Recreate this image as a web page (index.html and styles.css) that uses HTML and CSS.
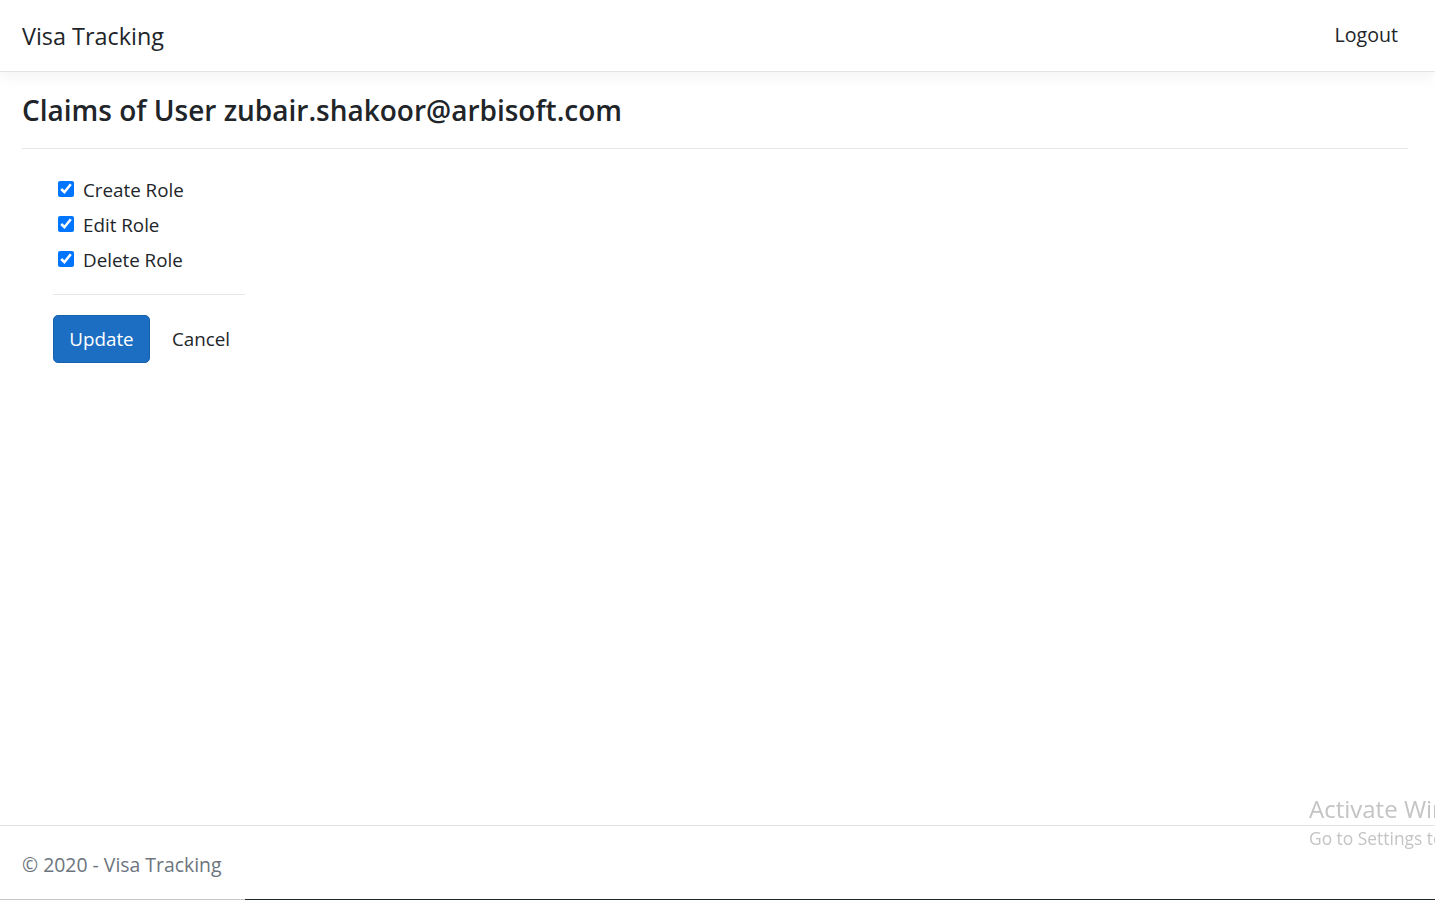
FILE: index.html
```html
<!DOCTYPE html>
<html lang="en">
<head>
<meta charset="utf-8">
<title>Claims - Visa Tracking</title>
<link rel="stylesheet" href="styles.css">
</head>
<body>
<div class="page">
  <header class="navbar">
    <a class="brand" href="#">Visa Tracking</a>
    <a class="nav-link" href="#">Logout</a>
  </header>
  <main class="main">
    <h4 class="title">Claims of User zubair.shakoor@arbisoft.com</h4>
    <hr class="rule">
    <form class="claims-form">
      <label class="check-row"><input type="checkbox" class="check" checked><span>Create Role</span></label>
      <label class="check-row"><input type="checkbox" class="check" checked><span>Edit Role</span></label>
      <label class="check-row"><input type="checkbox" class="check" checked><span>Delete Role</span></label>
      <hr class="rule rule-short">
      <div class="actions">
        <button type="button" class="btn btn-primary">Update</button>
        <a class="btn-link" href="#">Cancel</a>
      </div>
    </form>
  </main>
  <footer class="footer">
    <div class="footer-text">&copy; 2020 - Visa Tracking</div>
    <div class="bottom-strip"><div class="strip-light"></div><div class="strip-dark"></div></div>
  </footer>
</div>
<div class="watermark">
  <div class="wm-title">Activate Windows</div>
  <div class="wm-sub">Go to Settings to activate Windows.</div>
</div>
</body>
</html>
```
FILE: styles.css
```css
html, body {
  margin: 0;
  padding: 0;
  height: 100%;
  overflow: hidden;
  background: #fff;
}
body {
  font-family: "Open Sans", "Noto Sans", "Liberation Sans", sans-serif;
  font-size: 18.8px;
  color: #212529;
}
a { text-decoration: none; }
.page {
  display: flex;
  flex-direction: column;
  min-height: 100vh;
}
.navbar {
  height: 71px;
  border-bottom: 1px solid #e3e3e3;
  box-shadow: 0 5px 15px rgba(0,0,0,0.05);
  display: flex;
  align-items: center;
  justify-content: space-between;
  padding: 0 37px 0 22px;
  flex-shrink: 0;
}
.brand {
  font-size: 23.4px;
  color: #212529;
  line-height: 30px;
}
.nav-link {
  color: #212529;
  font-size: 19.6px;
  line-height: 30px;
  margin-top: -2px;
}
.main {
  padding: 20px 27px 0 22px;
  flex: 1;
}
.title {
  margin: 0;
  font-size: 28px;
  font-weight: 600;
  line-height: 36px;
  color: #212529;
}
.rule {
  margin: 20px 0 0;
  border: 0;
  border-top: 1px solid #e6e6e6;
  height: 0;
}
.claims-form {
  margin: 24px 0 0 31px;
  width: 192px;
  display: flex;
  flex-direction: column;
}
.check-row {
  display: flex;
  align-items: center;
  height: 35px;
  line-height: 35px;
  white-space: nowrap;
}
.check {
  width: 16px;
  height: 16px;
  margin: 0 9px 4px 5px;
  accent-color: #0075ff;
}
.rule-short {
  margin-top: 16px;
}
.actions {
  display: flex;
  align-items: center;
  margin-top: 20px;
  gap: 22px;
}
.btn {
  font-family: inherit;
  font-size: 18.8px;
  height: 48px;
  padding: 0 15px;
  border-radius: 5px;
  cursor: pointer;
}
.btn-primary {
  background: #1b6ec2;
  border: 1px solid #1861ac;
  color: #fff;
  width: 97px;
}
.btn-link {
  color: #212529;
  font-size: 18.8px;
}
.footer {
  border-top: 1px solid #e3e3e3;
  flex-shrink: 0;
}
.footer-text {
  height: 73px;
  line-height: 77px;
  padding-left: 22px;
  color: #6c757d;
  font-size: 19.4px;
}
.bottom-strip {
  display: flex;
  height: 1px;
}
.strip-light {
  width: 245px;
  background: #c6c6c6;
}
.strip-dark {
  flex: 1;
  background: #1e2a2a;
}
.watermark {
  position: fixed;
  left: 1309px;
  top: 793px;
  color: #c4c4c4;
  white-space: nowrap;
  pointer-events: none;
}
.wm-title {
  font-size: 24px;
  line-height: 32px;
}
.wm-sub {
  font-size: 17.4px;
  line-height: 26px;
}
```
